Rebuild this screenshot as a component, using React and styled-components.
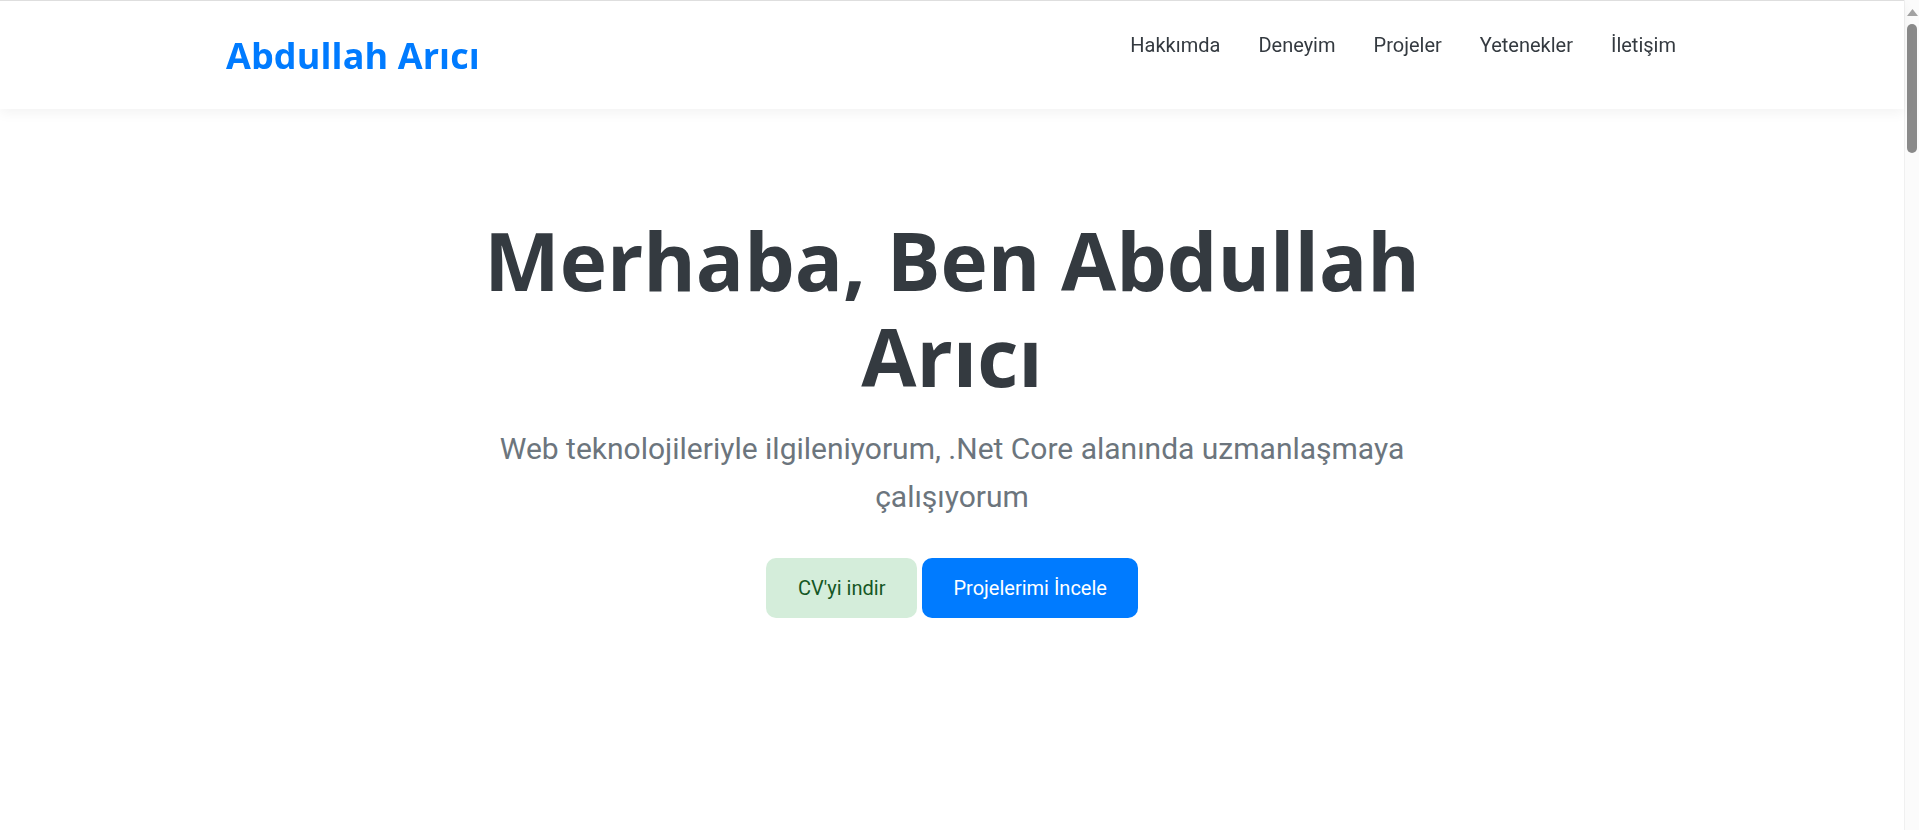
import React from "react";
import styled, { createGlobalStyle } from "styled-components";

const GlobalStyle = createGlobalStyle`
  * { box-sizing: border-box; }
  html, body { overflow: hidden; }
  body {
    margin: 0;
    font-family: Roboto, "Liberation Sans", sans-serif;
    background: #fff;
    color: #343a40;
  }
`;

// Page area (leaves room for the window scrollbar)
const Page = styled.div`
  margin-right: 15px;
  height: 100vh;
  display: flex;
  flex-direction: column;
`;

// Navbar
const Navbar = styled.header`
  flex: 0 0 109px;
  position: relative;
  z-index: 5;
  background: #fff;
  border-top: 1px solid #dedede;
  box-shadow: 0 4px 12px rgba(0, 0, 0, 0.05);
`;

const NavInner = styled.div`
  max-width: 1452px;
  height: 100%;
  margin: 0 auto;
  display: flex;
  align-items: center;
  justify-content: space-between;
`;

const Logo = styled.a`
  font-family: "Open Sans", sans-serif;
  font-weight: 700;
  font-size: 36px;
  color: #007bff;
  text-decoration: none;
  letter-spacing: 0.1px;
`;

const NavLinks = styled.nav`
  display: flex;
  gap: 38px;
  padding-bottom: 21px;
  margin-right: 2px;
`;

const NavLink = styled.a`
  font-size: 20px;
  color: #343a40;
  text-decoration: none;
`;

// Hero
const Hero = styled.section`
  flex: 1;
  padding-top: 103px;
  display: flex;
  flex-direction: column;
  align-items: center;
  text-align: center;
`;

const Title = styled.h1`
  margin: 0;
  max-width: 1000px;
  font-family: "Open Sans", sans-serif;
  font-weight: 700;
  font-size: 80px;
  line-height: 96px;
  color: #343a40;
`;

const Lead = styled.p`
  margin: 21px 0 0;
  max-width: 960px;
  font-size: 30px;
  line-height: 48px;
  color: #6c757d;
`;

const Actions = styled.div`
  display: flex;
  gap: 5px;
  margin-top: 37px;
`;

const Button = styled.a`
  display: inline-flex;
  align-items: center;
  height: 60px;
  padding: 0 ${({ $variant }) => ($variant === "primary" ? "31px" : "32px")};
  border-radius: 10px;
  font-size: 20px;
  text-decoration: none;
  background: ${({ $variant }) => ($variant === "primary" ? "#007bff" : "#d4edda")};
  color: ${({ $variant }) => ($variant === "primary" ? "#fff" : "#155724")};
`;

// Window scrollbar drawn over the right edge
const ScrollTrack = styled.div`
  position: fixed;
  top: 0;
  right: 0;
  width: 15px;
  height: 100vh;
  background: #fbfbfb;
  border-left: 1px solid #f0f0f0;
  display: flex;
  flex-direction: column;
  align-items: center;
`;

const ScrollArrow = styled.svg`
  flex: 0 0 auto;
  margin-top: 9px;
`;

const ScrollThumb = styled.div`
  width: 10px;
  height: 129px;
  margin-top: 8px;
  border-radius: 5px;
  background: #8a8a8a;
`;

const links = [
  { id: "hakkimda", title: "Hakkımda" },
  { id: "deneyim", title: "Deneyim" },
  { id: "projeler", title: "Projeler" },
  { id: "yetenekler", title: "Yetenekler" },
  { id: "iletisim", title: "İletişim" },
];

export default function App() {
  return (
    <>
      <GlobalStyle />
      <Page>
        <Navbar>
          <NavInner>
            <Logo href="#">Abdullah Arıcı</Logo>
            <NavLinks>
              {links.map((l) => (
                <NavLink key={l.id} href={`#${l.id}`}>
                  {l.title}
                </NavLink>
              ))}
            </NavLinks>
          </NavInner>
        </Navbar>

        <Hero>
          <Title>Merhaba, Ben Abdullah Arıcı</Title>
          <Lead>
            Web teknolojileriyle ilgileniyorum, .Net Core alanında uzmanlaşmaya çalışıyorum
          </Lead>
          <Actions>
            <Button href="#">CV'yi indir</Button>
            <Button href="#projeler" $variant="primary">
              Projelerimi İncele
            </Button>
          </Actions>
        </Hero>
      </Page>

      <ScrollTrack>
        <ScrollArrow width="11" height="7" viewBox="0 0 11 7">
          <path d="M5.5 0 L11 7 L0 7 Z" fill="#a3a3a3" />
        </ScrollArrow>
        <ScrollThumb />
      </ScrollTrack>
    </>
  );
}
